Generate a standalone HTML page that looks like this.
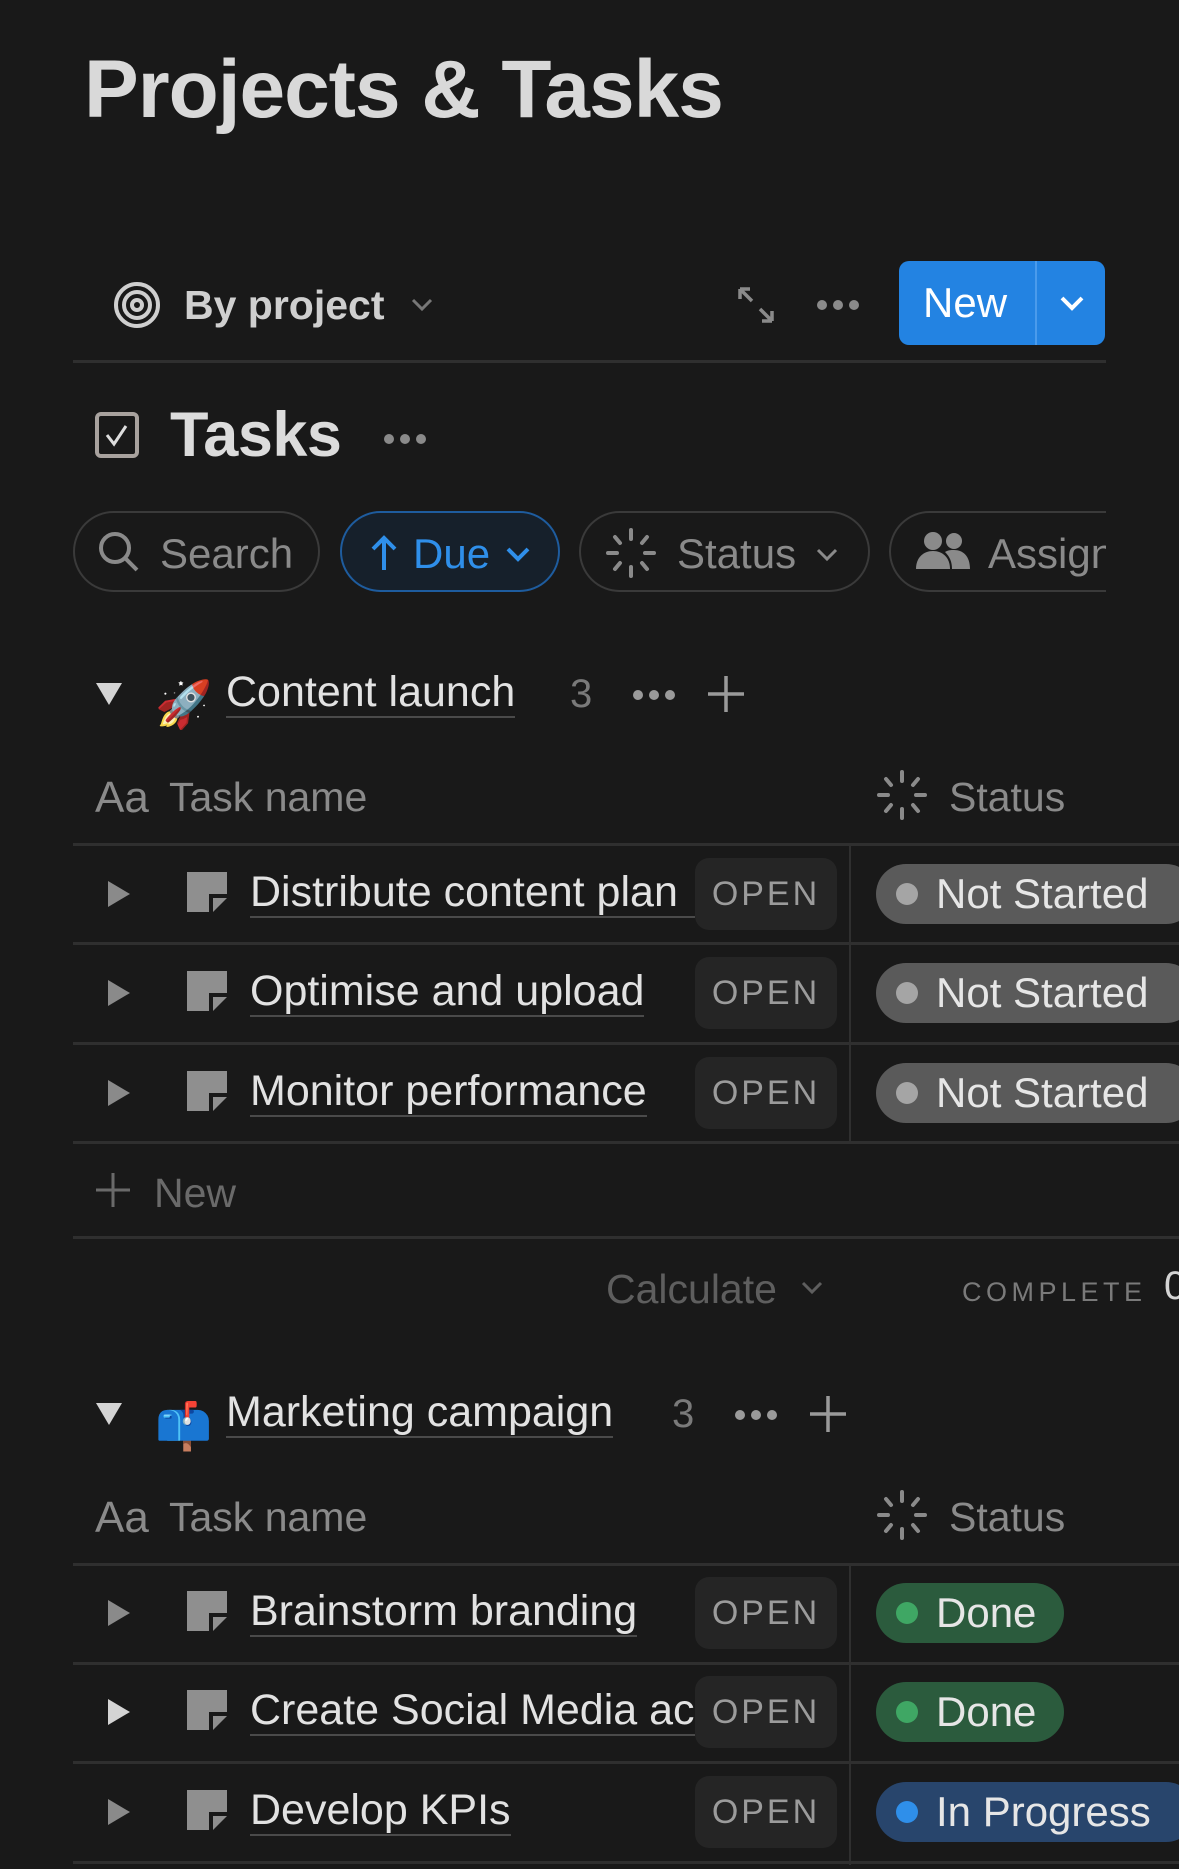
<!DOCTYPE html>
<html><head><meta charset="utf-8"><style>
*{margin:0;padding:0;box-sizing:border-box}
body{width:1179px;height:1869px;background:#191919;overflow:hidden;position:relative;font-family:"Liberation Sans",sans-serif;color:#d4d4d4}
.a{position:absolute;white-space:nowrap}
.line{position:absolute;height:3px;background:#2f2f2f}
.pill{position:absolute;border:2px solid #3a3a3a;border-radius:42px;height:81px;top:511px}
.ul{border-bottom:2px solid #4a4a4a;line-height:1.1}
.open{position:absolute;left:695px;width:142px;height:72px;background:#252525;border-radius:14px;color:#9b9b9b;font-size:34px;letter-spacing:3px;text-align:center;line-height:72px}
.st{position:absolute;left:876px;height:60px;border-radius:30px;font-size:42px;line-height:60px;padding-left:60px;color:#e6e6e6;white-space:nowrap}
.st i{position:absolute;left:20px;top:19px;width:22px;height:22px;border-radius:50%}
.tri{position:absolute;width:0;height:0;border-top:13px solid transparent;border-bottom:13px solid transparent;border-left:22px solid #8a8a8a}
.name{position:absolute;left:250px;font-size:43px;overflow:hidden;color:#e2e2e2;white-space:nowrap}
</style></head><body>

<div class="a" style="left:84px;top:43px;font-size:82px;font-weight:bold;letter-spacing:-1px;color:#d9d9d9">Projects &amp; Tasks</div>

<!-- toolbar -->
<svg class="a" style="left:113px;top:281px" width="48" height="48" viewBox="0 0 48 48" fill="none" stroke="#cfcfcf" stroke-width="4"><circle cx="24" cy="24" r="21"/><circle cx="24" cy="24" r="13"/><circle cx="24" cy="24" r="5"/></svg>
<div class="a" style="left:184px;top:282px;font-size:41px;font-weight:bold;color:#cfcfcf">By project</div>
<svg class="a" style="left:410px;top:297px" width="24" height="16" viewBox="0 0 24 16" fill="none" stroke="#777" stroke-width="3"><path d="M3 3l9 9 9-9"/></svg>
<svg class="a" style="left:736px;top:285px" width="40" height="40" viewBox="0 0 40 40" fill="none" stroke="#8a8a8a" stroke-width="3.5"><path d="M4 4l12 12M4 4v10M4 4h10M36 36L24 24M36 36V26M36 36H26"/></svg>
<svg class="a" style="left:816px;top:298px" width="44" height="14" viewBox="0 0 44 14" fill="#8a8a8a"><circle cx="6" cy="7" r="5"/><circle cx="22" cy="7" r="5"/><circle cx="38" cy="7" r="5"/></svg>
<div class="a" style="left:899px;top:261px;width:206px;height:84px;background:#2383e2;border-radius:10px"></div>
<div class="a" style="left:1035px;top:261px;width:2px;height:84px;background:#4a9bec"></div>
<div class="a" style="left:923px;top:279px;font-size:42px;color:#fff">New</div>
<svg class="a" style="left:1058px;top:294px" width="28" height="18" viewBox="0 0 28 18" fill="none" stroke="#fff" stroke-width="4"><path d="M4 4l10 10 10-10"/></svg>
<div class="line" style="left:73px;top:360px;width:1033px"></div>

<!-- Tasks heading -->
<svg class="a" style="left:94px;top:411px" width="46" height="48" viewBox="0 0 46 48" fill="none" stroke="#a8a29e" stroke-width="4"><rect x="3" y="3" width="40" height="42" rx="4"/><path d="M13 24l7 9 12-18" stroke="#ddd" stroke-width="3"/></svg>
<div class="a" style="left:170px;top:399px;font-size:63px;font-weight:bold;color:#dcdcdc;letter-spacing:-0.5px">Tasks</div>
<svg class="a" style="left:383px;top:432px" width="44" height="14" viewBox="0 0 44 14" fill="#8a8a8a"><circle cx="6" cy="7" r="5"/><circle cx="22" cy="7" r="5"/><circle cx="38" cy="7" r="5"/></svg>

<!-- filters -->
<div class="pill" style="left:73px;width:247px"></div>
<svg class="a" style="left:97px;top:530px" width="44" height="44" viewBox="0 0 44 44" fill="none" stroke="#8a8a8a" stroke-width="4"><circle cx="18" cy="18" r="14"/><path d="M28 28l12 12"/></svg>
<div class="a" style="left:160px;top:530px;font-size:42px;color:#8a8a8a">Search</div>
<div class="pill" style="left:340px;width:220px;border-color:#1e5c9e;background:#16202b"></div>
<svg class="a" style="left:370px;top:534px" width="28" height="38" viewBox="0 0 28 38" fill="none" stroke="#2f8fea" stroke-width="4"><path d="M14 36V4M3 15L14 4l11 11"/></svg>
<div class="a" style="left:413px;top:530px;font-size:42px;color:#2f8fea">Due</div>
<svg class="a" style="left:505px;top:546px" width="26" height="18" viewBox="0 0 26 18" fill="none" stroke="#2f8fea" stroke-width="4"><path d="M3 3l10 10 10-10"/></svg>
<div class="pill" style="left:579px;width:291px"></div>
<svg class="a" style="left:605px;top:527px" width="52" height="52" viewBox="0 0 52 52" fill="none" stroke="#8a8a8a" stroke-width="4" stroke-linecap="round"><path d="M26 3v9M26 40v9M3 26h9M40 26h9M10 10l5 6M42 10l-5 6M10 42l5-6M42 42l-5-6"/></svg>
<div class="a" style="left:677px;top:530px;font-size:42px;color:#8a8a8a">Status</div>
<svg class="a" style="left:815px;top:547px" width="24" height="16" viewBox="0 0 24 16" fill="none" stroke="#8a8a8a" stroke-width="3"><path d="M3 3l9 9 9-9"/></svg>
<div class="a" style="left:889px;top:511px;width:290px;height:81px;overflow:hidden">
 <div style="position:absolute;left:0;top:0;width:320px;height:81px;border:2px solid #3a3a3a;border-radius:42px"></div>
 <svg style="position:absolute;left:26px;top:20px" width="56" height="40" viewBox="0 0 56 40" fill="#8a8a8a"><circle cx="18" cy="10" r="9"/><path d="M1 38c0-12 8-18 17-18s17 6 17 18z"/><circle cx="39" cy="10" r="8"/><path d="M30 21c3-2 6-2 9-2 9 0 16 6 16 19H37c0-7-2-12-7-17z"/></svg>
 <div style="position:absolute;left:99px;top:19px;font-size:42px;color:#8a8a8a">Assign</div>
</div>
<div class="a" style="left:1106px;top:505px;width:80px;height:95px;background:#191919"></div>

<!-- Group 1 -->
<div class="a" style="left:96px;top:683px;width:0;height:0;border-left:13px solid transparent;border-right:13px solid transparent;border-top:22px solid #d4d4d4"></div>
<div class="a" style="left:155px;top:668px;font-size:46px;font-family:'Noto Sans CJK SC',sans-serif">🚀</div>
<div class="a ul" style="left:226px;top:669px;font-size:43px;color:#e2e2e2">Content launch</div>
<div class="a" style="left:570px;top:672px;font-size:40px;color:#7a7a7a">3</div>
<svg class="a" style="left:632px;top:688px" width="44" height="14" viewBox="0 0 44 14" fill="#9a9a9a"><circle cx="6" cy="7" r="5"/><circle cx="22" cy="7" r="5"/><circle cx="38" cy="7" r="5"/></svg>
<svg class="a" style="left:707px;top:675px" width="38" height="38" viewBox="0 0 38 38" stroke="#9a9a9a" stroke-width="3.5"><path d="M19 1v36M1 19h36"/></svg>

<div class="a" style="left:95px;top:773px;font-size:44px;color:#8a8a8a">Aa</div>
<div class="a" style="left:169px;top:774px;font-size:41px;color:#8a8a8a">Task name</div>
<svg class="a" style="left:876px;top:769px" width="52" height="52" viewBox="0 0 52 52" fill="none" stroke="#8a8a8a" stroke-width="4" stroke-linecap="round"><path d="M26 3v9M26 40v9M3 26h9M40 26h9M10 10l5 6M42 10l-5 6M10 42l5-6M42 42l-5-6"/></svg>
<div class="a" style="left:949px;top:774px;font-size:41px;color:#8a8a8a">Status</div>

<div class="line" style="left:73px;top:843px;width:1106px"></div>
<div class="line" style="left:73px;top:942px;width:1106px"></div>
<div class="line" style="left:73px;top:1042px;width:1106px"></div>
<div class="line" style="left:73px;top:1141px;width:1106px"></div>
<div class="a" style="left:849px;top:845px;width:2px;height:297px;background:#2f2f2f"></div>

<!-- rows -->
<div class="tri" style="left:108px;top:881px"></div>
<div class="tri" style="left:108px;top:980px"></div>
<div class="tri" style="left:108px;top:1080px"></div>
<svg class="a" style="left:187px;top:872px" width="40" height="40" viewBox="0 0 40 40" fill="#8f8f8f"><path d="M0 0h40v22H22v18H0z"/><path d="M26 26h14L26 40z"/></svg>
<svg class="a" style="left:187px;top:971px" width="40" height="40" viewBox="0 0 40 40" fill="#8f8f8f"><path d="M0 0h40v22H22v18H0z"/><path d="M26 26h14L26 40z"/></svg>
<svg class="a" style="left:187px;top:1071px" width="40" height="40" viewBox="0 0 40 40" fill="#8f8f8f"><path d="M0 0h40v22H22v18H0z"/><path d="M26 26h14L26 40z"/></svg>
<div class="name ul" style="top:869px;width:445px">Distribute content plan</div>
<div class="name ul" style="top:968px">Optimise and upload</div>
<div class="name ul" style="top:1068px">Monitor performance</div>
<div class="open" style="top:858px">OPEN</div>
<div class="open" style="top:957px">OPEN</div>
<div class="open" style="top:1057px">OPEN</div>
<div class="st" style="top:864px;width:320px;background:#5a5a5a"><i style="background:#a5a5a5"></i>Not Started</div>
<div class="st" style="top:963px;width:320px;background:#5a5a5a"><i style="background:#a5a5a5"></i>Not Started</div>
<div class="st" style="top:1063px;width:320px;background:#5a5a5a"><i style="background:#a5a5a5"></i>Not Started</div>

<svg class="a" style="left:95px;top:1172px" width="36" height="36" viewBox="0 0 36 36" stroke="#6a6a6a" stroke-width="3"><path d="M18 1v34M1 18h34"/></svg>
<div class="a" style="left:154px;top:1170px;font-size:41px;color:#6a6a6a">New</div>
<div class="line" style="left:73px;top:1236px;width:1106px"></div>
<div class="a" style="left:606px;top:1266px;font-size:41px;color:#5e5e5e">Calculate</div>
<svg class="a" style="left:800px;top:1280px" width="24" height="16" viewBox="0 0 24 16" fill="none" stroke="#5e5e5e" stroke-width="3"><path d="M3 3l9 9 9-9"/></svg>
<div class="a" style="left:962px;top:1277px;font-size:27px;color:#7a7a7a;letter-spacing:4.5px">COMPLETE</div>
<div class="a" style="left:1164px;top:1264px;font-size:40px;color:#d4d4d4">0</div>

<!-- Group 2 -->
<div class="a" style="left:96px;top:1403px;width:0;height:0;border-left:13px solid transparent;border-right:13px solid transparent;border-top:22px solid #d4d4d4"></div>
<div class="a" style="left:155px;top:1390px;font-size:46px;font-family:'Noto Sans CJK SC',sans-serif">📫</div>
<div class="a ul" style="left:226px;top:1389px;font-size:43px;color:#e2e2e2">Marketing campaign</div>
<div class="a" style="left:672px;top:1392px;font-size:40px;color:#7a7a7a">3</div>
<svg class="a" style="left:734px;top:1408px" width="44" height="14" viewBox="0 0 44 14" fill="#9a9a9a"><circle cx="6" cy="7" r="5"/><circle cx="22" cy="7" r="5"/><circle cx="38" cy="7" r="5"/></svg>
<svg class="a" style="left:809px;top:1395px" width="38" height="38" viewBox="0 0 38 38" stroke="#9a9a9a" stroke-width="3.5"><path d="M19 1v36M1 19h36"/></svg>

<div class="a" style="left:95px;top:1493px;font-size:44px;color:#8a8a8a">Aa</div>
<div class="a" style="left:169px;top:1494px;font-size:41px;color:#8a8a8a">Task name</div>
<svg class="a" style="left:876px;top:1489px" width="52" height="52" viewBox="0 0 52 52" fill="none" stroke="#8a8a8a" stroke-width="4" stroke-linecap="round"><path d="M26 3v9M26 40v9M3 26h9M40 26h9M10 10l5 6M42 10l-5 6M10 42l5-6M42 42l-5-6"/></svg>
<div class="a" style="left:949px;top:1494px;font-size:41px;color:#8a8a8a">Status</div>

<div class="line" style="left:73px;top:1563px;width:1106px"></div>
<div class="line" style="left:73px;top:1662px;width:1106px"></div>
<div class="line" style="left:73px;top:1761px;width:1106px"></div>
<div class="line" style="left:73px;top:1861px;width:1106px"></div>
<div class="a" style="left:849px;top:1565px;width:2px;height:300px;background:#2f2f2f"></div>

<div class="tri" style="left:108px;top:1600px"></div>
<div class="tri" style="left:108px;top:1699px;border-left-color:#d4d4d4"></div>
<div class="tri" style="left:108px;top:1799px"></div>
<svg class="a" style="left:187px;top:1591px" width="40" height="40" viewBox="0 0 40 40" fill="#8f8f8f"><path d="M0 0h40v22H22v18H0z"/><path d="M26 26h14L26 40z"/></svg>
<svg class="a" style="left:187px;top:1690px" width="40" height="40" viewBox="0 0 40 40" fill="#8f8f8f"><path d="M0 0h40v22H22v18H0z"/><path d="M26 26h14L26 40z"/></svg>
<svg class="a" style="left:187px;top:1790px" width="40" height="40" viewBox="0 0 40 40" fill="#8f8f8f"><path d="M0 0h40v22H22v18H0z"/><path d="M26 26h14L26 40z"/></svg>
<div class="name ul" style="top:1588px">Brainstorm branding</div>
<div class="name ul" style="top:1687px;width:445px">Create Social Media accounts</div>
<div class="name ul" style="top:1787px">Develop KPIs</div>
<div class="open" style="top:1577px">OPEN</div>
<div class="open" style="top:1676px">OPEN</div>
<div class="open" style="top:1776px">OPEN</div>
<div class="st" style="top:1583px;width:188px;background:#2b5b3d"><i style="background:#3fa764"></i>Done</div>
<div class="st" style="top:1682px;width:188px;background:#2b5b3d"><i style="background:#3fa764"></i>Done</div>
<div class="st" style="top:1782px;width:320px;background:#28456c"><i style="background:#2f8fea"></i>In Progress</div>

</body></html>
